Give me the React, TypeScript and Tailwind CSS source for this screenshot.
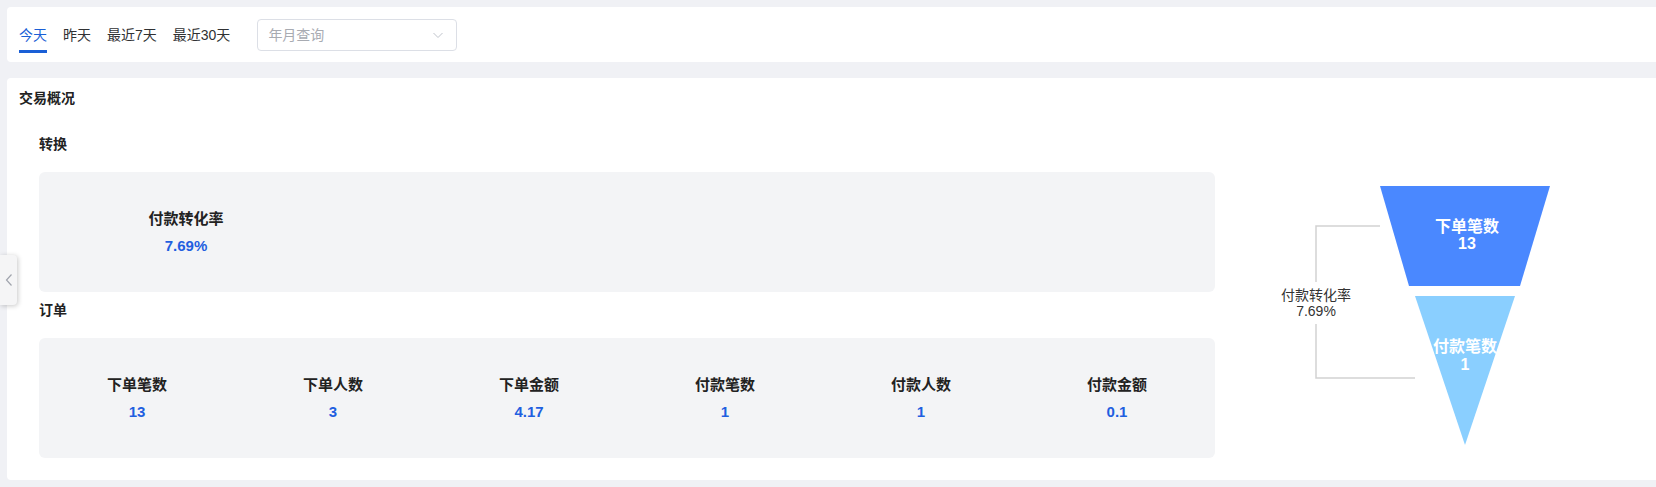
import React from "react";

const FONT = { fontFamily: '"Liberation Sans", "Noto Sans CJK SC", sans-serif' };

const tabs = ["今天", "昨天", "最近7天", "最近30天"];
const orderStats = [
  { label: "下单笔数", value: "13" },
  { label: "下单人数", value: "3" },
  { label: "下单金额", value: "4.17" },
  { label: "付款笔数", value: "1" },
  { label: "付款人数", value: "1" },
  { label: "付款金额", value: "0.1" },
];

function Stat({ label, value }: { label: string; value: string }) {
  return (
    <div className="flex flex-col items-center justify-center">
      <div className="text-[15px] leading-[20px] font-bold text-[#222]">{label}</div>
      <div className="mt-[7px] text-[15px] leading-[20px] font-bold text-[#1f5fe0]">{value}</div>
    </div>
  );
}

function Funnel() {
  return (
    <svg width="441" height="324" viewBox="0 0 441 324" className="block">
      <polygon points="165,52 335,52 305,152 194,152" fill="#4a88ff" />
      <polygon points="200,162 300,162 250,311" fill="#8acfff" />
      <polyline points="165,92 101,92 101,148" fill="none" stroke="#d2d2d2" strokeWidth="1.5" />
      <polyline points="101,190 101,244 200,244" fill="none" stroke="#d2d2d2" strokeWidth="1.5" />
      <text x="101" y="166" textAnchor="middle" fontSize="14" fill="#333" style={FONT}>付款转化率</text>
      <text x="101" y="182" textAnchor="middle" fontSize="14" fill="#333" style={FONT}>7.69%</text>
      <text x="252" y="98" textAnchor="middle" fontSize="16" fontWeight="bold" fill="#fff" style={FONT}>下单笔数</text>
      <text x="252" y="115" textAnchor="middle" fontSize="16" fontWeight="bold" fill="#fff" style={FONT}>13</text>
      <text x="250" y="218" textAnchor="middle" fontSize="16" fontWeight="bold" fill="#fff" style={FONT}>付款笔数</text>
      <text x="250" y="236" textAnchor="middle" fontSize="16" fontWeight="bold" fill="#fff" style={FONT}>1</text>
    </svg>
  );
}

export default function App() {
  return (
    <div className="relative min-h-screen bg-[#f0f1f5] pt-[7px] pl-[7px] pb-[7px]" style={FONT}>
      {/* top filter card */}
      <div className="h-[55px] bg-white rounded-l-[4px] flex items-start pt-[12px] pl-[12px]">
        <div className="flex items-start gap-[16px] mt-[6px]">
          {tabs.map((t, i) => (
            <div key={t} className="flex flex-col items-stretch">
              <div
                className={
                  "text-[14px] leading-[20px] " +
                  (i === 0 ? "text-[#1a5fd6]" : "text-[#303133]")
                }
              >
                {t}
              </div>
              <div className={"mt-[5px] h-[3px] " + (i === 0 ? "bg-[#1a5fd6]" : "bg-transparent")} />
            </div>
          ))}
        </div>
        <div className="ml-[27px] w-[200px] h-[32px] border border-[#dcdfe6] rounded-[4px] flex items-center justify-between pl-[10px] pr-[12px]">
          <span className="text-[14px] text-[#a8abb2] leading-[20px]">年月查询</span>
          <svg width="12" height="12" viewBox="0 0 12 12">
            <polyline points="1.5,4 6,8.5 10.5,4" fill="none" stroke="#c0c4cc" strokeWidth="1" />
          </svg>
        </div>
      </div>

      {/* overview card */}
      <div className="mt-[16px] h-[402px] bg-white rounded-l-[4px] pl-[12px] pt-[10px]">
        <div className="text-[14px] leading-[20px] font-bold text-[#222]">交易概况</div>
        <div className="flex mt-[26px] pl-[20px]">
          <div className="w-[1176px] flex flex-col">
            <div className="text-[14px] leading-[20px] font-bold text-[#222]">转换</div>
            <div className="mt-[18px] h-[120px] bg-[#f3f4f6] rounded-[6px] grid grid-cols-4">
              <Stat label="付款转化率" value="7.69%" />
            </div>
            <div className="mt-[8px] text-[14px] leading-[20px] font-bold text-[#222]">订单</div>
            <div className="mt-[18px] h-[120px] bg-[#f3f4f6] rounded-[6px] grid grid-cols-6">
              {orderStats.map((s) => (
                <Stat key={s.label} label={s.label} value={s.value} />
              ))}
            </div>
          </div>
          <div className="flex-1">
            <Funnel />
          </div>
        </div>
      </div>

      {/* collapse handle */}
      <div className="absolute left-0 top-[255px] w-[17px] h-[50px] bg-[#f5f5f6] rounded-r-[4px] shadow-[1px_1px_5px_rgba(0,0,0,0.22)] flex items-center justify-center">
        <svg width="8" height="14" viewBox="0 0 8 14">
          <polyline points="6.5,1.5 1.5,7 6.5,12.5" fill="none" stroke="#a0a4ad" strokeWidth="1.2" />
        </svg>
      </div>
    </div>
  );
}
